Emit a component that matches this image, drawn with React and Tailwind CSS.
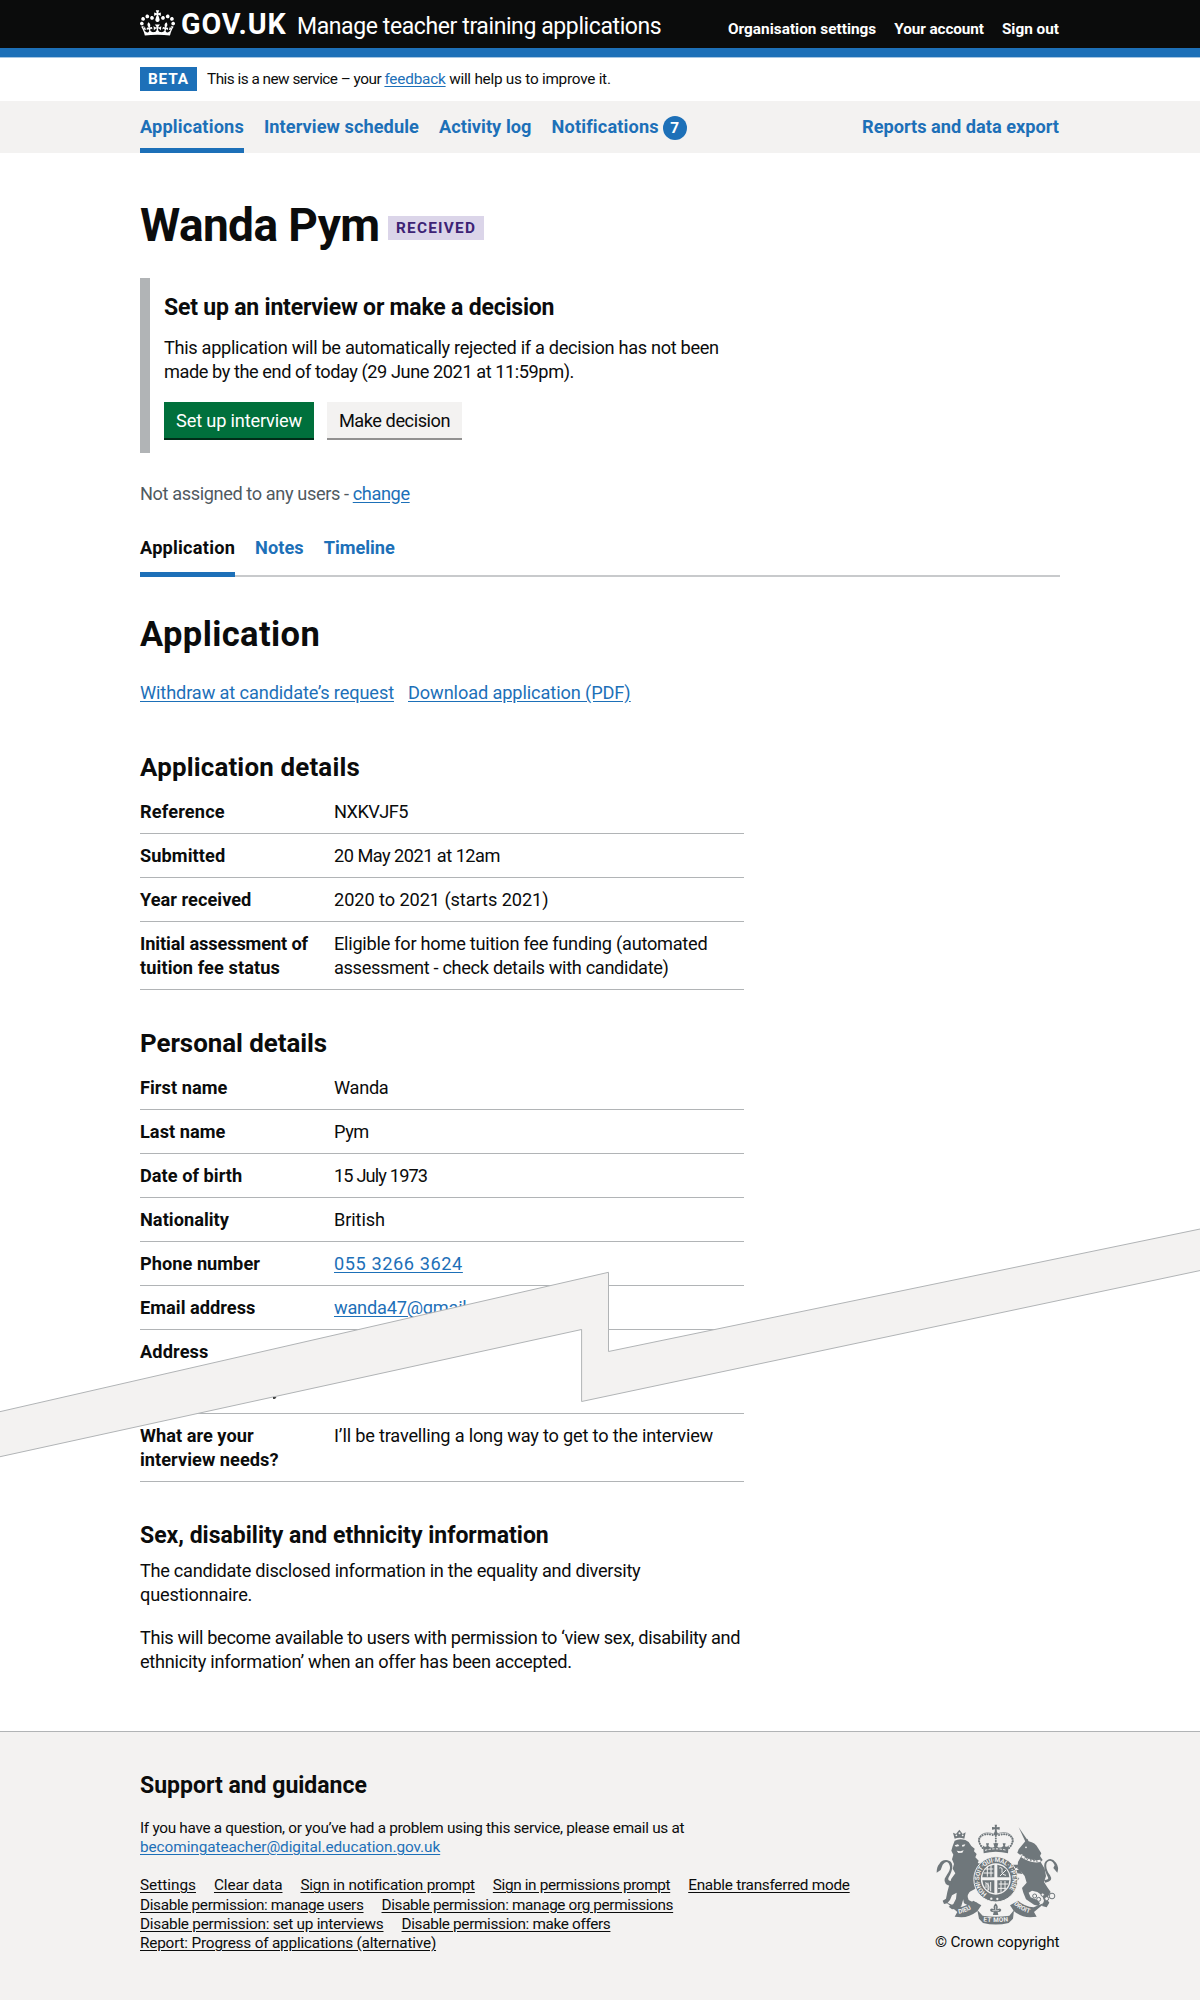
import React from "react";

const CROWN =
  "M25 30.2c3.5 1.5 7.7-.2 9.1-3.7 1.5-3.6-.2-7.8-3.9-9.2-3.6-1.4-7.6.3-9.1 3.9-1.4 3.5.3 7.5 3.9 9zM9 39.5c3.6 1.5 7.8-.2 9.2-3.7 1.5-3.6-.2-7.8-3.9-9.1-3.6-1.5-7.6.2-9.1 3.8-1.4 3.5.3 7.5 3.8 9zM4.4 57.2c3.5 1.5 7.7-.2 9.1-3.8 1.5-3.6-.2-7.7-3.9-9.1-3.5-1.5-7.6.3-9.1 3.8-1.4 3.5.3 7.6 3.9 9.1zm38.3-21.4c3.5 1.5 7.7-.2 9.1-3.8 1.5-3.6-.2-7.7-3.9-9.1-3.6-1.5-7.6.3-9.1 3.8-1.3 3.6.4 7.7 3.9 9.1zm64.4-5.6c-3.6 1.5-7.8-.2-9.1-3.7-1.5-3.6.2-7.8 3.8-9.2 3.6-1.4 7.7.3 9.2 3.9 1.3 3.5-.4 7.5-3.9 9zm15.9 9.3c-3.6 1.5-7.7-.2-9.1-3.7-1.5-3.6.2-7.8 3.7-9.1 3.6-1.5 7.7.2 9.2 3.8 1.5 3.5-.3 7.5-3.8 9zm4.7 17.7c-3.6 1.5-7.8-.2-9.2-3.8-1.5-3.6.2-7.7 3.9-9.1 3.6-1.5 7.7.3 9.2 3.8 1.3 3.5-.4 7.6-3.9 9.1zM89.3 35.8c-3.6 1.5-7.8-.2-9.2-3.8-1.4-3.6.2-7.7 3.9-9.1 3.6-1.5 7.7.3 9.2 3.8 1.4 3.6-.3 7.7-3.9 9.1zM69.7 17.7l8.9 4.7V9.3l-8.9 2.8c-.2-.3-.5-.6-.9-.9L72.4 0H59.6l3.5 11.2c-.3.3-.6.5-.9.9l-8.8-2.8v13.1l8.8-4.7c.3.3.6.7.9.9l-5 15.4v.1c-.2.8-.4 1.6-.4 2.4 0 4.1 3.1 7.5 7 8.1h.2c.3 0 .7.1 1 .1.4 0 .7 0 1-.1h.2c4-.6 7.1-4.1 7.1-8.1 0-.8-.1-1.7-.4-2.4V34l-5.1-15.4c.4-.2.7-.6 1-.9zM66 92.8c16.9 0 32.8 1.1 47.1 3.2 4-16.9 8.9-26.7 14-33.5l-9.6-3.4c1 4.9 1.1 7.2 0 10.2-1.5-1.4-3-4.3-4.2-8.7L108.6 76c2.8-2 5-3.2 7.5-3.3-4.4 9.4-10 11.9-13.6 11.2-4.3-.8-6.3-4.6-5.6-7.9 1-4.7 5.7-5.9 8-.5 4.3-8.7-3-11.4-7.6-8.8 7.1-7.2 7.9-13.5 2.1-21.1-8 6.1-8.1 12.3-4.5 20.8-4.7-5.4-12.1-2.5-9.5 6.2 3.4-5.2 7.9-2 7.2 3.1-.6 4.3-6.4 7.8-13.5 7.2-10.3-.9-10.9-8-11.2-13.8 2.5-.5 7.1 1.8 11 7.3L80.2 60c-4.1 4.4-8 5.3-12.3 5.4 1.4-4.4 8-11.6 8-11.6H55.5s6.4 7.2 7.9 11.6c-4.2-.1-8-1-12.3-5.4l1.4 16.4c3.9-5.5 8.5-7.7 10.9-7.3-.3 5.8-.9 12.8-11.1 13.8-7.2.6-12.9-2.9-13.5-7.2-.7-5 3.8-8.3 7.1-3.1 2.7-8.7-4.6-11.6-9.4-6.2 3.7-8.5 3.6-14.7-4.6-20.8-5.8 7.6-5 13.9 2.2 21.1-4.7-2.6-11.9.1-7.7 8.8 2.3-5.5 7.1-4.2 8.1.5.7 3.3-1.3 7.1-5.7 7.9-3.5.7-9-1.8-13.5-11.2 2.5.1 4.7 1.3 7.5 3.3l-4.7-15.4c-1.2 4.4-2.7 7.2-4.3 8.7-1.1-3-.9-5.3 0-10.2l-9.5 3.4c5 6.9 9.9 16.7 14 33.5 14.8-2.1 30.8-3.2 47.7-3.2z";

function Header() {
  return (
    <header className="h-[48px] bg-[#0b0c0c] px-[140px] pt-[10px] text-white">
      <div className="flex items-baseline whitespace-nowrap">
        <svg viewBox="0 0 132 97" className="h-[26px] w-[35px] self-start" fill="currentColor" aria-hidden="true">
          <path d={CROWN} />
        </svg>
        <span className="ml-[6px] w-[116px] text-[28.7px] font-bold leading-[28px] tracking-[0.9px]">GOV.UK</span>
        <span className="text-[23px] leading-[28px] tracking-[-0.4px]">Manage teacher training applications</span>
        <nav className="ml-auto flex gap-[18px] text-[15.33px] font-bold leading-[20px]">
          <a className="tracking-[0.02px]">Organisation settings</a>
          <a className="tracking-[-0.1px]">Your account</a>
          <a className="pr-px">Sign out</a>
        </nav>
      </div>
    </header>
  );
}

function PrimaryNav() {
  return (
    <nav className="flex h-[52px] gap-[20px] whitespace-nowrap bg-[#f3f2f1] px-[140px] text-[18.2px] font-bold text-[#1d70b8]">
      <a className="h-full border-b-5 border-[#1d70b8] pt-[14px] leading-[24px] tracking-[0.16px]">Applications</a>
      <a className="pt-[14px] leading-[24px] tracking-[0.06px]">Interview schedule</a>
      <a className="pt-[14px] leading-[24px] tracking-[0.05px]">Activity log</a>
      <a className="flex pt-[14px] leading-[24px] tracking-[0.15px]">
        Notifications
        <span className="ml-[4px] mt-[1px] h-[24px] w-[24px] rounded-full bg-[#1d70b8] text-center text-[15.33px] leading-[24px] text-white">7</span>
      </a>
      <a className="ml-auto pr-px pt-[14px] leading-[24px]">Reports and data export</a>
    </nav>
  );
}

function Row({ label, children, className = "" }) {
  return (
    <div className={`flex border-b border-[#b1b4b6] pb-[9px] pt-[10px] leading-[24px] ${className}`}>
      <dt className="w-[194px] shrink-0 whitespace-pre-line font-bold tracking-[0.03px]">{label}</dt>
      <dd className="whitespace-pre-line">{children}</dd>
    </div>
  );
}

const links = [
  [
    ["Settings", "tracking-[0px]"],
    ["Clear data", "tracking-[-0.1px]"],
    ["Sign in notification prompt", "tracking-[-0.22px]"],
    ["Sign in permissions prompt", "tracking-[-0.36px]"],
    ["Enable transferred mode", "tracking-[-0.26px]"],
  ],
  [
    ["Disable permission: manage users", "tracking-[-0.34px]"],
    ["Disable permission: manage org permissions", "tracking-[-0.36px]"],
  ],
  [
    ["Disable permission: set up interviews", "tracking-[-0.25px]"],
    ["Disable permission: make offers", "tracking-[-0.34px]"],
  ],
  [["Report: Progress of applications (alternative)", "tracking-[-0.19px]"]],
];

function Crest() {
  const c = "#6f777b";
  const bg = "#f3f2f1";
  return (
    <svg viewBox="0 0 402 330" className="h-[110px] w-[134px]" fill={c} stroke="none" aria-hidden="true">
      <defs>
        <path id="garter" d="M171 221A49.500 51.500 0 1 1 224 221" />
        <path id="dieu" d="M86 281Q114 277 137 257" />
        <path id="mon" d="M160 304Q197 309 240 303" />
        <path id="droit" d="M251 253Q276 277 316 283" />
      </defs>

      {/* lion */}
      <path d="M68 78L74 62Q88 54 106 60L116 66 124 78 134 86 132 94 140 102 136 112 146 122 142 132 150 146 140 164 142 186 136 206 118 216 104 226 98 244 94 258 86 266 66 268 56 260 70 252 78 236 80 218 66 226 60 240 52 250 42 252 38 242 48 236 52 216 58 194 64 176 76 160 68 146 72 132 66 118 70 104 64 92Z" />
      <path d="M128 204Q106 226 116 240L128 246 142 248 140 260 118 258 102 250 98 232 106 216Z" />
      <path d="M124 124L146 130 160 134 158 146 148 148 138 158 122 150Z" />
      <path d="M64 198Q40 194 44 176C56 156 66 146 56 130Q48 120 38 134L32 150 20 158Q20 140 28 132 34 120 48 120C76 122 68 152 56 172Q50 184 68 184Z" />
      <path d="M74 56L69 38 78 42 88 29 98 42 107 37 103 56Q88 51 74 56Z" />
      <g fill={bg}>
        <circle cx="79" cy="46" r="2.6" /><circle cx="88.5" cy="40" r="3" /><circle cx="98" cy="46" r="2.6" />
        <path d="M74 76l10-3 4 5-10 2zM96 75l10-2-3 6-6 1z" />
        <path d="M80 92l11 2 10-3-4 7-12 1z" />
      </g>

      {/* unicorn */}
      <path d="M266 22L294 62 287 67Z" />
      <path d="M284 66L292 56 296 64Q316 68 324 84L334 100 330 108 338 120 332 126 344 146 348 168 342 186 352 202 362 216 350 236 358 248 350 262 336 258 342 242 336 226 322 216 306 212 296 218 302 232 322 240 330 250 326 258 312 254 288 238 280 218 276 204 290 188 284 168 272 154 262 146 264 126 272 112 278 102 270 104 262 98 266 88Z" />
      <path d="M270 150L256 150 246 158 250 172 262 182 268 176 260 168 262 160 278 162ZM250 134L240 142 246 150 264 142 272 134Z" />
      <path d="M346 188Q372 184 360 166C346 148 344 122 360 122Q370 124 374 136L370 144 382 158Q388 142 378 128 366 112 352 120C334 130 346 156 354 172Q358 180 342 180Z" />
      <g fill={bg}>
        <circle cx="288" cy="82" r="2.6" />
        <path d="M274 112Q302 132 332 126L331 119Q304 124 277 106Z" />
      </g>
      <path d="M284 116l4-8 4 11 7-8 3 11 8-7 2 9 8-8 1 10" fill="none" stroke={c} strokeWidth="3" />
      <g fill={bg} stroke={c} strokeWidth="3">
        <circle cx="314" cy="228" r="6" /><circle cx="326" cy="238" r="6" /><circle cx="338" cy="224" r="5" />
        <circle cx="350" cy="236" r="6" /><circle cx="366" cy="228" r="8.5" />
      </g>

      {/* royal crown */}
      <path d="M194 14h7l-1 8 9-1v8l-9-1 1 9h-7l1-9-9 1v-8l9 1z" />
      <circle cx="197.5" cy="41" r="6" />
      <g fill="none" stroke={c} strokeWidth="6" strokeDasharray="0.1 7.5" strokeLinecap="round">
        <path d="M158 84Q140 62 152 50T192 46" />
        <path d="M237 84Q255 62 243 50T203 46" />
        <path d="M197.5 48V74" />
      </g>
      <path d="M160 88Q136 60 152 46T196 44Q226 30 243 46T235 88" fill="none" stroke={c} strokeWidth="2" />
      <path d="M160 86L158 76Q166 84 170 78L168 70H177L175 78Q184 86 193 80L190 70H205L202 80Q211 86 220 78L218 70H227L225 78Q229 84 237 76L235 86 234 100Q197 90 161 100Z" />
      <path d="M165 91Q197 82 230 91" fill="none" stroke={bg} strokeWidth="3" strokeDasharray="7 4" />

      {/* garter and shield */}
      <ellipse cx="197.5" cy="178" rx="66" ry="68" stroke={bg} strokeWidth="3" />
      <ellipse cx="197.5" cy="177" rx="45" ry="47" fill={bg} />
      <text fill={bg} fontSize="19" fontWeight="700" className="tracking-[-0.7px]">
        <textPath href="#garter">HONI·SOIT·QUI·MAL·Y·PENSE</textPath>
      </text>
      <g fill={bg}><circle cx="184" cy="236" r="3.5" /><circle cx="202" cy="237" r="3.5" /></g>
      <path d="M157 172Q158 140 193 134V172ZM202 134Q236 140 238 172H202ZM157 181H193V220Q160 214 157 181ZM202 181H238Q236 214 202 220Z" />
      <g stroke={bg} strokeWidth="3" fill="none">
        <path d="M164 147h26M160 159h30M172 140v30M183 136v34M206 192h28M204 205h26M213 183v34M225 183v28" />
        <path d="M208 144q10-4 8 8t12 14M228 150l-18 18M166 188q14 4 10 22M168 190v14M174 188v24M182 186v28" />
      </g>

      {/* ribbons */}
      <path d="M48 247L84 262Q110 260 130 242L154 256 142 274Q118 292 94 292L74 290 82 276Z" />
      <path d="M347 247L311 262Q284 260 264 242L240 256 252 274Q276 292 300 292L320 290 312 276Z" />
      <path d="M142 270L158 287Q197 293 238 287L252 270 249 296 236 309Q197 318 159 309L147 296Z" />
      <g fill={bg} fontSize="19" fontWeight="700">
        <text><textPath href="#dieu">DIEU</textPath></text>
        <text className="tracking-[1px]"><textPath href="#mon">ET MON</textPath></text>
        <text><textPath href="#droit">DROIT</textPath></text>
      </g>
      <path d="M197 250Q206 258 202 268 212 262 214 270 212 278 203 275L205 285H189L191 275Q182 278 180 270 182 262 192 268 188 258 197 250Z" />
      <path d="M197 258v12M187 272h20" stroke={bg} strokeWidth="2" />
    </svg>
  );
}

export default function App() {
  return (
    <div className="relative min-h-[2000px] overflow-hidden bg-white font-[Roboto,sans-serif] text-[18.2px] text-[#0b0c0c]">
      <Header />
      <div className="h-[10px] border-b border-[#a5c6e3] bg-[#1d70b8]" />

      <div className="flex h-[43px] px-[140px] pt-[9px] text-[15.33px] leading-[24px]">
        <strong className="h-[24px] w-[57px] bg-[#1d70b8] pl-[8px] tracking-[0.8px] text-white">BETA</strong>
        <p className="ml-[10px] whitespace-nowrap tracking-[-0.51px]">
          This is a new service – your <a className="tracking-[-0.2px] text-[#1d70b8] underline underline-offset-2">feedback</a>
          <span className="tracking-[-0.25px]"> will help us to improve it.</span>
        </p>
      </div>

      <PrimaryNav />

      <main className="px-[140px] pt-[48px]">
        <div className="flex">
          <h1 className="w-[248px] whitespace-nowrap text-[46px] font-bold leading-[48px] tracking-[-0.6px]">Wanda Pym</h1>
          <strong className="mt-[15px] h-[24px] w-[96px] bg-[#dbd5e9] pl-[8px] text-[15.33px] leading-[25px] tracking-[1.25px] text-[#3d2375]">RECEIVED</strong>
        </div>

        <section className="mt-[29px] h-[175px] border-l-10 border-[#b1b4b6] pl-[14px] pt-[16px]">
          <h2 className="text-[23px] font-bold leading-[27px] tracking-[-0.2px]">Set up an interview or make a decision</h2>
          <p className="mt-[15px] leading-[24px]">
            <span className="tracking-[-0.32px]">This application will be automatically rejected if a decision has not been</span>
            <br />
            <span className="tracking-[-0.44px]">made by the end of today (29 June 2021 at 11:59pm).</span>
          </p>
          <div className="mt-[18px] flex gap-[13px] text-center leading-[37px]">
            <button className="h-[38px] w-[150px] border-b-2 border-[#002d18] bg-[#00703c] tracking-[-0.17px] text-white">Set up interview</button>
            <button className="h-[38px] w-[135px] border-b-2 border-[#929191] bg-[#f3f2f1] tracking-[-0.45px]">Make decision</button>
          </div>
        </section>

        <p className="mt-[29px] leading-[24px] tracking-[-0.4px] text-[#505a5f]">
          Not assigned to any users - <a className="text-[#1d70b8] underline underline-offset-2">change</a>
        </p>

        <nav className="mt-[30px] flex h-[41px] gap-[20px] border-b-2 border-[#c8cacc] font-bold leading-[24px] text-[#1d70b8]">
          <a className="h-[41px] border-b-5 border-[#1d70b8] tracking-[0.22px] text-[#0b0c0c]">Application</a>
          <a className="tracking-[0.05px]">Notes</a>
          <a className="tracking-[-0.05px]">Timeline</a>
        </nav>

        <h2 className="mt-[37px] text-[34.5px] font-bold leading-[40px] tracking-[0.4px]">Application</h2>
        <p className="mt-[27px] flex gap-[14px] leading-[24px] text-[#1d70b8] underline underline-offset-2">
          <a className="tracking-[-0.12px]">Withdraw at candidate’s request</a>
          <a className="tracking-[-0.11px]">Download application (PDF)</a>
        </p>

        <div className="w-[604px]">
          <h3 className="mt-[46px] text-[25.9px] font-bold leading-[32px] tracking-[0.18px]">Application details</h3>
          <dl className="mt-[7px]">
            <Row label={<span className="tracking-[0.15px]">Reference</span>}><span className="tracking-[-0.55px]">NXKVJF5</span></Row>
            <Row label={<span className="tracking-[0.08px]">Submitted</span>}><span className="tracking-[-0.52px]">20 May 2021 at 12am</span></Row>
            <Row label="Year received"><span className="tracking-[-0.08px]">2020 to 2021 (starts 2021)</span></Row>
            <Row label={<span><span className="tracking-[-0.12px]">Initial assessment of</span>{"\n"}<span className="tracking-[0.08px]">tuition fee status</span></span>}>
              <span className="tracking-[-0.26px]">Eligible for home tuition fee funding (automated</span>{"\n"}
              <span className="tracking-[-0.33px]">assessment - check details with candidate)</span>
            </Row>
          </dl>

          <h3 className="mt-[37px] text-[25.9px] font-bold leading-[32px] tracking-[-0.04px]">Personal details</h3>
          <dl className="mt-[7px]">
            <Row label="First name"><span className="tracking-[-0.3px]">Wanda</span></Row>
            <Row label="Last name"><span className="tracking-[-0.45px]">Pym</span></Row>
            <Row label="Date of birth"><span className="tracking-[-0.85px]">15 July 1973</span></Row>
            <Row label="Nationality"><span className="tracking-[-0.1px]">British</span></Row>
            <Row label="Phone number"><a className="tracking-[0.57px] text-[#1d70b8] underline underline-offset-2">055 3266 3624</a></Row>
            <Row label="Email address"><a className="tracking-[-0.22px] text-[#1d70b8] underline underline-offset-2">wanda47@gmail.com</a></Row>
            <Row label={<span className="tracking-[0.12px]">Address</span>} className="h-[84px]" />
            <Row label={"What are your\ninterview needs?"}><span className="tracking-[-0.2px]">I’ll be travelling a long way to get to the interview</span></Row>
          </dl>

          <h3 className="mt-[40px] text-[23px] font-bold leading-[27px]">Sex, disability and ethnicity information</h3>
          <p className="mt-[10px] whitespace-pre-line leading-[24px]">
            <span className="tracking-[-0.29px]">The candidate disclosed information in the equality and diversity</span>{"\n"}
            <span className="tracking-[-0.2px]">questionnaire.</span>
          </p>
          <p className="mt-[19px] whitespace-pre-line leading-[24px]">
            <span className="tracking-[-0.34px]">This will become available to users with permission to ‘view sex, disability and</span>{"\n"}
            <span className="tracking-[-0.28px]">ethnicity information’ when an offer has been accepted.</span>
          </p>
        </div>
      </main>

      <footer className="mt-[57px] flex h-[269px] border-t border-[#b1b4b6] bg-[#f3f2f1] px-[140px] pt-[40px] text-[15.33px] leading-[19.2px]">
        <div className="whitespace-nowrap">
          <h2 className="text-[23px] font-bold leading-[27px]">Support and guidance</h2>
          <p className="mt-[20px] tracking-[-0.3px]">If you have a question, or you’ve had a problem using this service, please email us at</p>
          <p><a className="tracking-[-0.06px] text-[#1d70b8] underline underline-offset-2">becomingateacher@digital.education.gov.uk</a></p>
          <div className="mt-[19px]">
            {links.map((row, i) => (
              <div key={i} className="flex gap-[18px]">
                {row.map(([text, cls]) => (
                  <a key={text} className={`underline underline-offset-2 ${cls}`}>{text}</a>
                ))}
              </div>
            ))}
          </div>
        </div>
        <div className="-mr-[4px] ml-auto w-[134px] pt-[48px]">
          <Crest />
          <p className="mt-[3px] whitespace-nowrap pl-[5px] tracking-[-0.15px]">© Crown copyright</p>
        </div>
      </footer>

      {/* page break band over the details list */}
      <svg className="absolute left-0 top-[1220px]" width="1200" height="250" viewBox="0 0 1200 250" aria-hidden="true">
        <path
          d="M-5 192.8L608.5 52.3V131.5L1205 8V49.500L581.6 181.5V109.5L-5 237.8Z"
          fill="#f3f2f1"
          stroke="#b1b4b6"
          strokeWidth="1"
        />
        <path d="M273 177.300h3.500l-1.500 1.500h-2z" fill="#0b0c0c" />
      </svg>
    </div>
  );
}
